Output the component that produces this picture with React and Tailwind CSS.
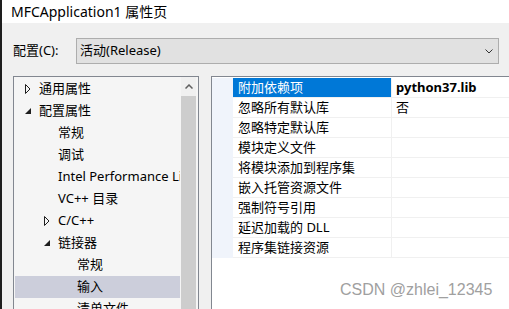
import React from 'react';

const treeItems = [
  { label: '通用属性', level: 0, arrow: 'closed' },
  { label: '配置属性', level: 0, arrow: 'open' },
  { label: '常规', level: 1 },
  { label: '调试', level: 1 },
  { label: 'Intel Performance Libraries', level: 1 },
  { label: 'VC++ 目录', level: 1 },
  { label: 'C/C++', level: 1, arrow: 'closed' },
  { label: '链接器', level: 1, arrow: 'open' },
  { label: '常规', level: 2 },
  { label: '输入', level: 2, selected: true },
  { label: '清单文件', level: 2 },
];

const props = [
  { name: '附加依赖项', value: 'python37.lib', active: true },
  { name: '忽略所有默认库', value: '否' },
  { name: '忽略特定默认库', value: '' },
  { name: '模块定义文件', value: '' },
  { name: '将模块添加到程序集', value: '' },
  { name: '嵌入托管资源文件', value: '' },
  { name: '强制符号引用', value: '' },
  { name: '延迟加载的 DLL', value: '' },
  { name: '程序集链接资源', value: '' },
];

const indent = ['pl-0', 'pl-[19px]', 'pl-[38px]'];

// 树节点的小三角
const Arrow = ({ type }) => {
  if (type === 'closed')
    return (
      <svg width="6" height="10" viewBox="0 0 6 10">
        <polygon points="0.5,0.5 5,5 0.5,9.5" fill="none" stroke="#1e1e1e" strokeWidth="1" />
      </svg>
    );
  if (type === 'open')
    return (
      <svg width="6" height="6" viewBox="0 0 6 6">
        <polygon points="6,0 6,6 0,6" fill="#1e1e1e" />
      </svg>
    );
  return null;
};

export default function App() {
  return (
    <div className="relative w-[509px] h-[309px] overflow-hidden flex bg-[#f0f0f0] text-black font-['Noto_Sans','Noto_Sans_CJK_SC',sans-serif]">
      <div className="w-[2px] shrink-0 bg-[#1e1e1e]" />
      <div className="flex-1 min-w-0 flex flex-col">
        {/* 标题栏 */}
        <div className="h-[23px] shrink-0 bg-white pl-[9px] text-[14px] leading-[23px] whitespace-nowrap">
          MFCApplication1 属性页
        </div>

        {/* 配置 */}
        <div className="flex items-center h-[26px] mt-[15px] pl-[11px] shrink-0 text-[13px]">
          <span className="w-[63px] shrink-0">配置(C):</span>
          <div className="w-[423px] shrink-0 h-[26px] border border-[#adadad] bg-[#e1e1e1] flex items-center pl-[3px] pr-[5px]">
            <span className="flex-1">活动(Release)</span>
            <svg width="8" height="5" viewBox="0 0 8 5">
              <polyline points="0.5,0.5 4,4 7.5,0.5" fill="none" stroke="#333" strokeWidth="1" />
            </svg>
          </div>
        </div>

        <div className="flex mt-[12px] flex-1 min-h-0 pl-[11px]">
          {/* 左侧树 */}
          <div className="w-[186px] shrink-0 border-t border-l border-r border-[#828790] bg-[#f5f5f5] flex">
            <div className="flex-1 min-w-0 pt-[1px] px-[1px] text-[13px]">
              {treeItems.map((it, i) => (
                <div
                  key={i}
                  className={`h-[22px] flex items-center whitespace-nowrap overflow-hidden ${indent[it.level]} ${it.selected ? 'bg-[#cccedb]' : ''}`}
                >
                  <span className="w-[24px] shrink-0 pl-[10px] flex items-center">
                    <Arrow type={it.arrow} />
                  </span>
                  <span>{it.label}</span>
                </div>
              ))}
            </div>
            <div className="w-[15px] shrink-0 mr-[2px] flex flex-col bg-[#f0f0f0]">
              <div className="h-[19px] flex items-center justify-center">
                <svg width="8" height="5" viewBox="0 0 8 5">
                  <polyline points="0.5,4.5 4,1 7.5,4.5" fill="none" stroke="#606060" strokeWidth="1.5" />
                </svg>
              </div>
              <div className="flex-1 bg-[#cdcdcd]" />
            </div>
          </div>

          <div className="w-[12px] shrink-0" />

          {/* 右侧属性表 */}
          <div className="flex-1 min-w-0 border-t border-l border-[#828790] bg-white pt-[1px] text-[13px]">
            {props.map((p, i) => (
              <div key={i} className="h-[20px] flex">
                <div className="w-[21px] shrink-0 bg-[#f0f4fb]" />
                <div
                  className={`w-[159px] shrink-0 border-b border-r border-[#f0f0f0] pl-[5px] leading-[19px] whitespace-nowrap ${p.active ? 'bg-[#0078d7] text-white' : ''}`}
                >
                  {p.name}
                </div>
                <div className={`flex-1 border-b border-[#f0f0f0] pl-[4px] leading-[19px] whitespace-nowrap ${p.active ? 'font-bold' : ''}`}>
                  {p.value}
                </div>
              </div>
            ))}
          </div>
        </div>
      </div>

      {/* 水印 */}
      <div className="absolute left-[340px] top-[282px] text-[16px] leading-none text-[#a0a0a0] font-['Liberation_Sans',sans-serif] whitespace-nowrap">
        CSDN @zhlei_12345
      </div>
    </div>
  );
}
